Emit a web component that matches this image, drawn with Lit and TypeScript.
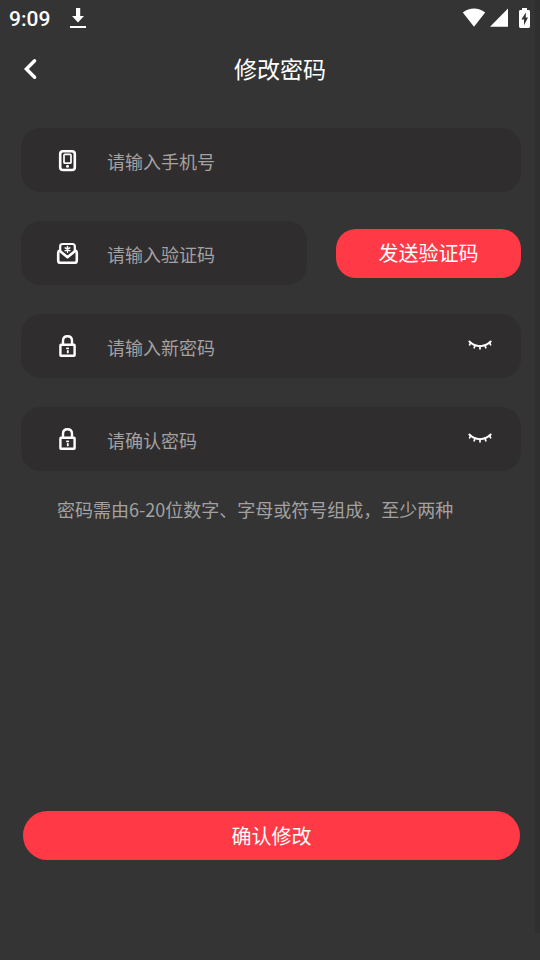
import { LitElement, html, css, svg } from "lit";
import { customElement, property, state } from "lit/decorators.js";

const icons = {
  phone: svg`
    <rect x="5.2" y="3.2" width="14.6" height="18.8" rx="2.8" stroke-width="2.6" />
    <rect x="9" y="6.4" width="7" height="8.8" rx="0.8" stroke-width="1.7" />
    <circle cx="12.5" cy="18.2" r="1.5" fill="currentColor" stroke="none" />`,
  mail: svg`
    <path d="M5.2 9.6V5.4Q5.2 3 7.6 3H17.4Q19.8 3 19.8 5.4V9.6" stroke-width="2.2" />
    <path d="M4.6 9.6Q3.2 10 3.2 12V19.4Q3.2 21.8 5.4 21.8H19.6Q21.8 21.8 21.8 19.4V12Q21.8 10 20.4 9.6" stroke-width="2.6" />
    <path d="M4.6 9.8L12.5 16.2L20.4 9.8" stroke-width="2.6" />
    <path d="M12.5 5.4V11.2M10.2 6.8L14.8 9.6M14.8 6.8L10.2 9.6" stroke-width="1.5" />`,
  lock: svg`
    <rect x="5.4" y="10.8" width="14.2" height="11" rx="0.6" stroke-width="2.4" />
    <path d="M8 10.4V6.8Q8 2.2 12.5 2.2Q17 2.2 17 6.8V10.4" stroke-width="2.4" />
    <path d="M12 14.4H13.2M12.8 17V18.4" stroke-width="1.9" />`,
};

@customElement("form-field")
class FormField extends LitElement {
  @property() icon: keyof typeof icons = "phone";
  @property() label = "";
  @property({ type: Boolean }) secret = false;
  @state() private shown = false;

  static styles = css`
    :host {
      display: block;
      min-width: 0;
    }
    .field {
      display: flex;
      align-items: center;
      height: 64px;
      box-sizing: border-box;
      padding: 0 28px 0 34px;
      border-radius: 20px;
      background: #302d2e;
      color: #fff;
    }
    .icon {
      flex: none;
      width: 25px;
      height: 25px;
      margin-right: 27px;
      fill: none;
      stroke: currentColor;
      stroke-linecap: round;
      stroke-linejoin: round;
    }
    .input {
      flex: 1;
      min-width: 0;
      padding: 2px 0 0;
      border: 0;
      outline: 0;
      background: none;
      color: #fff;
      font: 18px/28px "Noto Sans CJK SC", sans-serif;
    }
    .input::placeholder {
      color: #a3a1a1;
      opacity: 1;
    }
    .toggle {
      flex: none;
      display: flex;
      padding: 0 0 2px;
      border: 0;
      background: none;
      color: inherit;
      cursor: pointer;
    }
    .eye {
      width: 26px;
      height: 12px;
      fill: none;
      stroke: currentColor;
      stroke-linecap: round;
    }
  `;

  render() {
    return html`<div class="field">
      <svg class="icon" viewBox="0 0 25 25" aria-hidden="true">${icons[this.icon]}</svg>
      <input
        class="input"
        type=${this.secret && !this.shown ? "password" : "text"}
        aria-label=${this.label}
        placeholder=${this.label}
      />
      ${this.secret
        ? html`<button
            class="toggle"
            type="button"
            aria-label="显示密码"
            aria-pressed=${this.shown}
            @click=${() => (this.shown = !this.shown)}
          >
            <svg class="eye" viewBox="0 0 26 12" aria-hidden="true">
              <path d="M2.4 2.6Q7 7.2 13 7.2Q19 7.2 23.6 2.6" stroke-width="2.1" />
              <path d="M3.6 3.8L2.6 5.8M8 6.4L7.2 8.8M13 7.2V9.8M18 6.4L18.8 8.8M22.4 3.8L23.6 5.8" stroke-width="1.7" />
            </svg>
          </button>`
        : ""}
    </div>`;
  }
}

@customElement("app-root")
class AppRoot extends LitElement {
  static styles = css`
    :host {
      display: flex;
      flex-direction: column;
      position: relative;
      min-height: 100vh;
      box-sizing: border-box;
      background: #343434;
      color: #fff;
      font-family: "Noto Sans CJK SC", sans-serif;
    }
    .edge {
      position: absolute;
      top: 0;
      right: 0;
      bottom: 27px;
      width: 5px;
      background: #302f30;
    }
    .status {
      display: flex;
      align-items: center;
      height: 36px;
      padding: 0 10px 0 9px;
    }
    .time {
      padding-top: 2px;
      font: 500 21px/36px Roboto, sans-serif;
      margin-right: 20px;
    }
    .glyph {
      display: block;
      fill: currentColor;
    }
    .signals {
      display: flex;
      align-items: center;
      gap: 4px;
      margin-left: auto;
    }
    .header {
      display: grid;
      grid-template-columns: 40px 1fr 20px;
      align-items: center;
      height: 64px;
    }
    .back {
      display: flex;
      justify-content: flex-end;
      padding: 2px 1px 0 0;
      border: 0;
      background: none;
      color: inherit;
      cursor: pointer;
    }
    .title {
      margin: 0;
      text-align: center;
      font-size: 23px;
      line-height: 32px;
      font-weight: 400;
    }
    .form {
      flex: 1;
      display: flex;
      flex-direction: column;
      gap: 29px;
      padding: 28px 19px 100px 21px;
    }
    .row {
      display: flex;
      align-items: center;
      gap: 29px;
    }
    .grow {
      flex: 1;
    }
    .action {
      border: 0;
      padding: 0;
      height: 49px;
      border-radius: 25px;
      background: #ff3a46;
      color: #fff;
      font: 20px/28px "Noto Sans CJK SC", sans-serif;
      cursor: pointer;
    }
    .send {
      flex: none;
      width: 37%;
      border-radius: 20px;
    }
    .hint {
      margin: 0;
      padding: 0 36px;
      font-size: 18px;
      line-height: 18px;
      color: #a3a1a1;
    }
    .submit {
      margin: auto 1px 0 2px;
    }
  `;

  render() {
    return html`
      <div class="edge"></div>
      <div class="status">
        <span class="time">9:09</span>
        <svg class="glyph" width="16" height="22" viewBox="0 0 16 22" aria-hidden="true">
          <path d="M6 1H10.2V9H14L8 15.4L2 9H6ZM0 19H16V21H0Z" />
        </svg>
        <div class="signals">
          <svg class="glyph" width="24" height="20" viewBox="0 0 24 20" aria-hidden="true">
            <path d="M0.8 4.6Q6 0.6 12 0.6Q18 0.6 23.2 4.6L12 18.8Z" />
          </svg>
          <svg class="glyph" width="18" height="20" viewBox="0 0 18 20" aria-hidden="true">
            <path d="M18 0.6V18.8H0Z" />
          </svg>
          <svg class="glyph" width="18" height="22" viewBox="0 0 18 22" aria-hidden="true">
            <path
              fill-rule="evenodd"
              d="M10 1H15V3H16.6Q18 3 18 4.4V19.6Q18 21 16.6 21H8.4Q7 21 7 19.6V4.4Q7 3 8.4 3H10ZM13.8 5.6L9.4 12.4H12V18.2L16 10.6H13.8Z"
            />
          </svg>
        </div>
      </div>
      <header class="header">
        <button class="back" type="button" aria-label="返回">
          <svg width="16" height="22" viewBox="0 0 16 22" fill="none" stroke="currentColor" stroke-width="3.4" stroke-linecap="round" aria-hidden="true">
            <path d="M11.6 2.8L3.4 11L11.6 19.2" />
          </svg>
        </button>
        <h1 class="title">修改密码</h1>
      </header>
      <form class="form" @submit=${(e: Event) => e.preventDefault()}>
        <form-field icon="phone" label="请输入手机号"></form-field>
        <div class="row">
          <form-field class="grow" icon="mail" label="请输入验证码"></form-field>
          <button class="action send" type="button">发送验证码</button>
        </div>
        <form-field icon="lock" label="请输入新密码" secret></form-field>
        <form-field icon="lock" label="请确认密码" secret></form-field>
        <p class="hint">密码需由6-20位数字、字母或符号组成，至少两种</p>
        <button class="action submit" type="submit">确认修改</button>
      </form>
    `;
  }
}
